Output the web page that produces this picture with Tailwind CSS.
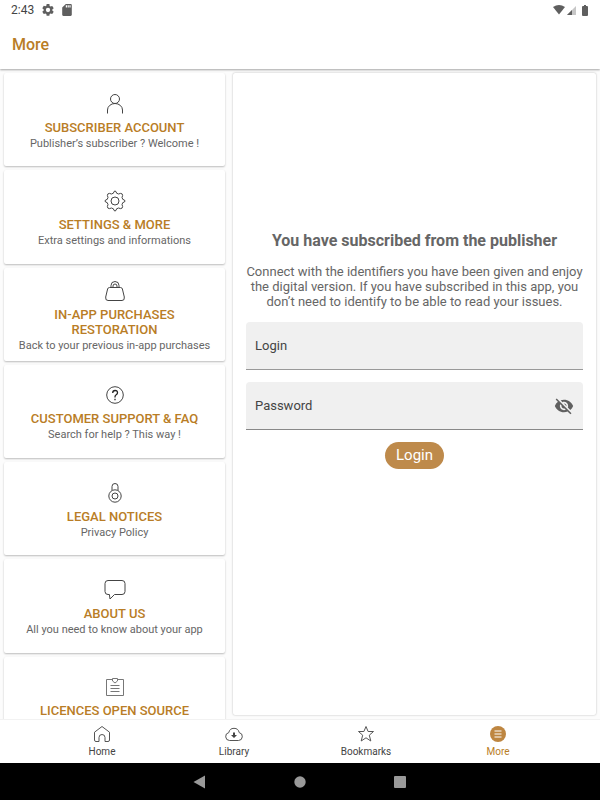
<!DOCTYPE html>
<html lang="en">
<head>
<meta charset="utf-8">
<meta name="viewport" content="width=device-width, initial-scale=1">
<title>More</title>
<script src="https://cdn.jsdelivr.net/npm/@tailwindcss/browser@4"></script>
</head>
<body class="flex h-screen flex-col overflow-hidden bg-[#fcfcfc] font-[Roboto,sans-serif] text-[#666]">

<div class="z-20 flex h-5 shrink-0 items-center justify-between bg-white pr-3 pl-[11px] text-[#5f5f5f]">
  <div class="flex items-center">
    <span class="text-xs text-[#444]">2:43</span>
    <svg class="ml-2 size-3" viewBox="2 2 20 20" fill="currentColor" aria-hidden="true"><path d="M19.14 12.94c.04-.3.06-.61.06-.94s-.02-.64-.07-.94l2.03-1.58a.5.5 0 0 0 .12-.61l-1.92-3.32a.49.49 0 0 0-.59-.22l-2.39.96a7 7 0 0 0-1.62-.94l-.36-2.54A.48.48 0 0 0 13.92 2h-3.84a.47.47 0 0 0-.47.41l-.36 2.54c-.59.24-1.13.57-1.62.94l-2.39-.96a.47.47 0 0 0-.59.22L2.74 8.87a.47.47 0 0 0 .12.61l2.03 1.58c-.05.3-.09.63-.09.94s.02.64.07.94l-2.03 1.58a.5.5 0 0 0-.12.61l1.92 3.32c.12.22.37.29.59.22l2.39-.96c.5.38 1.03.7 1.62.94l.36 2.54c.05.24.24.41.48.41h3.84c.24 0 .44-.17.47-.41l.36-2.54a6.8 6.8 0 0 0 1.62-.94l2.39.96c.22.08.47 0 .59-.22l1.92-3.32a.47.47 0 0 0-.12-.61zM12 15.6a3.6 3.6 0 1 1 0-7.2 3.6 3.6 0 0 1 0 7.2z"/></svg>
    <svg class="ml-2 h-3 w-[10px]" viewBox="4 2 16 20" fill="currentColor" aria-hidden="true"><path d="M18 2h-8L4 8v12c0 1.100.9 2 2 2h12c1.100 0 2-.9 2-2V4c0-1.100-.9-2-2-2zm-6 6h-2V4h2zm3 0h-2V4h2zm3 0h-2V4h2z"/></svg>
  </div>
  <div class="flex items-center">
    <svg class="h-[10px] w-3" viewBox="0 0 12 10" fill="currentColor" aria-hidden="true"><path d="M0 2Q6-2 12 2L6 9.500z"/></svg>
    <svg class="ml-[2px] size-[9px]" viewBox="0 0 9 9" fill="currentColor" aria-hidden="true"><path d="M9 0v9H0z" opacity=".35"/><path d="M5 4v5H0z"/></svg>
    <svg class="ml-[6px] h-[11px] w-[6px]" viewBox="0 0 6 11" fill="currentColor" aria-hidden="true"><path d="M2 0h2v1h1q1 0 1 1v8q0 1-1 1H1q-1 0-1-1V2q0-1 1-1h1z"/></svg>
  </div>
</div>

<header class="z-10 flex h-[49px] shrink-0 items-center bg-white px-3 shadow-[0_1px_2px_rgba(0,0,0,0.35)]">
  <h1 class="text-base font-medium text-[#b97d26]">More</h1>
</header>

<main class="flex min-h-0 flex-1 gap-2 pr-1 pl-1 pt-1">
  <ul class="grid min-h-[677px] w-[221px] shrink-0 auto-rows-fr gap-1 self-start text-center">
    <li><a href="#account" class="flex h-full flex-col items-center justify-center rounded-xs bg-white px-3 pt-1 shadow-[0_1px_2px_rgba(0,0,0,0.25)]">
      <svg class="mb-1 size-6" viewBox="0 0 24 24" fill="none" stroke="#444" aria-hidden="true"><circle cx="12" cy="7" r="4.500"/><path d="M4.500 21.500v-3.500a7.500 6.500 0 0 1 15 0v3.500"/></svg>
      <span class="text-[13px] leading-[15px] font-medium text-[#b97d26]">SUBSCRIBER ACCOUNT</span>
      <span class="mt-px text-[11px] leading-4">Publisher’s subscriber ? Welcome !</span></a></li>
    <li><a href="#settings" class="flex h-full flex-col items-center justify-center rounded-xs bg-white px-3 pt-1 shadow-[0_1px_2px_rgba(0,0,0,0.25)]">
      <svg class="mb-1 size-6" viewBox="0 0 24 24" fill="none" stroke="#444" stroke-linejoin="round" aria-hidden="true"><circle cx="12" cy="12" r="4"/><path d="M12 2q1.200 0 1.600 2.200l2 .8Q17.600 3.800 19.100 4.900 20.200 6.400 19 8.400l.8 2Q22 10.800 22 12t-2.200 1.600l-.8 2q1.200 2 .1 3.500-1.500 1.100-3.500-.1l-2 .8Q13.200 22 12 22t-1.600-2.200l-2-.8q-2 1.200-3.500.1-1.100-1.500.1-3.500l-.8-2Q2 13.200 2 12t2.200-1.600l.8-2Q3.800 6.400 4.900 4.900q1.500-1.100 3.500.1l2-.8Q10.800 2 12 2z"/></svg>
      <span class="text-[13px] leading-[15px] font-medium text-[#b97d26]">SETTINGS &amp; MORE</span>
      <span class="mt-px text-[11px] leading-4">Extra settings and informations</span></a></li>
    <li><a href="#purchases" class="flex h-full flex-col items-center justify-center rounded-xs bg-white px-3 pt-1 shadow-[0_1px_2px_rgba(0,0,0,0.25)]">
      <svg class="mb-1 size-6" viewBox="0 0 24 24" fill="none" stroke="#444" aria-hidden="true"><path d="M6.500 8.500h11q1.500 0 1.900 1.500l1.900 8q.6 3.500-2.300 3.500H5q-2.900 0-2.300-3.500l1.900-8q.4-1.500 1.900-1.500zM8 8.500V6.500a4 4 0 0 1 8 0v2M10 8.500V7a2 2 0 0 1 4 0v1.500"/></svg>
      <span class="text-[13px] leading-[15px] font-medium text-[#b97d26]">IN-APP PURCHASES<br>RESTORATION</span>
      <span class="mt-px text-[11px] leading-4">Back to your previous in-app purchases</span></a></li>
    <li><a href="#support" class="flex h-full flex-col items-center justify-center rounded-xs bg-white px-3 pt-1 shadow-[0_1px_2px_rgba(0,0,0,0.25)]">
      <svg class="mb-1 size-6" viewBox="0 0 24 24" fill="none" stroke="#444" aria-hidden="true"><circle cx="12" cy="12" r="8.300"/><path d="M9.700 10q0-2.500 2.400-2.500t2.400 2.200q0 1.200-1.300 2T12 14v.5M12 15.800v1.400" stroke="#222" stroke-width="1.300"/></svg>
      <span class="text-[13px] leading-[15px] font-medium text-[#b97d26]">CUSTOMER SUPPORT &amp; FAQ</span>
      <span class="mt-px text-[11px] leading-4">Search for help ? This way !</span></a></li>
    <li><a href="#legal" class="flex h-full flex-col items-center justify-center rounded-xs bg-white px-3 pt-1 shadow-[0_1px_2px_rgba(0,0,0,0.25)]">
      <svg class="mb-1 size-6" viewBox="0 0 24 24" fill="none" stroke="#444" aria-hidden="true"><circle cx="12" cy="15" r="6.200"/><circle cx="12" cy="15" r="3"/><path d="M9 9.500V5.500a3 3 0 0 1 6 0v4"/></svg>
      <span class="text-[13px] leading-[15px] font-medium text-[#b97d26]">LEGAL NOTICES</span>
      <span class="mt-px text-[11px] leading-4">Privacy Policy</span></a></li>
    <li><a href="#about" class="flex h-full flex-col items-center justify-center rounded-xs bg-white px-3 pt-1 shadow-[0_1px_2px_rgba(0,0,0,0.25)]">
      <svg class="mb-1 size-6" viewBox="0 0 24 24" fill="none" stroke="#444" stroke-linejoin="round" aria-hidden="true"><path d="M5 2.500h14q3 0 3 3v8q0 3-3 3h-7.500l-4.500 4.500-.6-4.500H5q-3 0-3-3v-8q0-3 3-3z"/></svg>
      <span class="text-[13px] leading-[15px] font-medium text-[#b97d26]">ABOUT US</span>
      <span class="mt-px text-[11px] leading-4">All you need to know about your app</span></a></li>
    <li><a href="#licences" class="flex h-full flex-col items-center justify-center rounded-xs bg-white px-3 pt-1 shadow-[0_1px_2px_rgba(0,0,0,0.25)]">
      <svg class="mb-1 size-6" viewBox="0 0 24 24" fill="none" stroke="#777" aria-hidden="true"><path d="M9.500 4.500h-6v16h17v-16h-6M9.500 3.500h5v2.500l-2.500 2-2.500-2zM7.500 10.500h9M7.500 13.500h9M7.500 16.500h9"/></svg>
      <span class="text-[13px] leading-[15px] font-medium text-[#b97d26]">LICENCES OPEN SOURCE</span>
      <span class="mt-px text-[11px] leading-4">Licences</span></a></li>
  </ul>

  <section class="mb-1 min-w-0 flex-1 rounded-xs bg-white px-[13px] pt-[158px] text-center shadow-[0_0_2px_rgba(0,0,0,0.3)]">
    <h2 class="text-base leading-5 font-bold">You have subscribed from the publisher</h2>
    <p class="mt-[13px] text-[13px] leading-[15px]">Connect with the identifiers you have been given and enjoy the digital version. If you have subscribed in this app, you don’t need to identify to be able to read your issues.</p>
    <form class="mt-[13px] flex flex-col items-center gap-3">
      <div class="flex h-12 w-full items-center rounded-t-sm border-b border-[#999] bg-[#f0f0f0] px-[9px] text-[13px] text-[#444]">
        <label for="login">Login</label>
        <input id="login" type="text" class="h-full min-w-0 flex-1 bg-transparent pl-3 outline-none">
      </div>
      <div class="flex h-12 w-full items-center rounded-t-sm border-b border-[#888] bg-[#f0f0f0] px-[9px] text-[13px] text-[#444]">
        <label for="password">Password</label>
        <input id="password" type="password" class="h-full min-w-0 flex-1 bg-transparent pl-3 outline-none">
        <button type="button" aria-label="Show password" class="text-[#606060]"><svg class="size-5" viewBox="0 0 24 24" fill="currentColor" aria-hidden="true"><path d="M12 7c2.760 0 5 2.240 5 5 0 .65-.13 1.260-.36 1.830l2.920 2.920c1.510-1.260 2.700-2.890 3.430-4.750-1.730-4.390-6-7.500-11-7.500-1.400 0-2.740.25-3.980.7l2.160 2.160C10.740 7.130 11.350 7 12 7zM2 4.270l2.280 2.280.46.46A11.800 11.800 0 0 0 1 12c1.730 4.390 6 7.500 11 7.500 1.550 0 3.030-.3 4.380-.84l.42.42L19.730 22 21 20.730 3.270 3zM7.530 9.800l1.550 1.550c-.05.21-.08.43-.08.65 0 1.660 1.340 3 3 3 .22 0 .44-.03.65-.08l1.550 1.550c-.67.33-1.410.53-2.200.53-2.760 0-5-2.240-5-5 0-.79.2-1.530.53-2.200zm4.310-.78l3.150 3.150.02-.16c0-1.660-1.340-3-3-3z"/></svg></button>
      </div>
      <button type="submit" class="h-[27px] rounded-full bg-[#be8a4b] px-[11px] text-[15px] text-white">Login</button>
    </form>
  </section>
</main>

<nav class="z-10 grid h-11 shrink-0 grid-cols-[36px_repeat(4,1fr)_36px] border-t border-[#f2f2f2] bg-white text-[10px] text-[#444]">
  <a href="#home" class="col-start-2 flex flex-col items-center pt-1">
    <svg class="size-5" viewBox="0 0 20 20" fill="none" stroke="#555" stroke-linejoin="round" aria-hidden="true"><path d="M2.500 8.200L10 2.500l7.500 5.700v7.800q0 1.500-1.500 1.500h-3v-4a3 3 0 0 0-6 0v4H4q-1.500 0-1.500-1.500z"/></svg>
    <span class="mt-[2px] leading-3">Home</span></a>
  <a href="#library" class="flex flex-col items-center pt-1">
    <svg class="size-5" viewBox="0 0 20 20" fill="none" stroke="#555" stroke-linejoin="round" aria-hidden="true"><path d="M5.500 16.500a4 4 0 0 1-.7-7.900 5.300 5.300 0 0 1 10.400 0 4 4 0 0 1-.7 7.900z"/><path fill="#444" stroke="none" d="M9 8.500h2V11h2l-3 3-3-3h2z"/></svg>
    <span class="mt-[2px] leading-3">Library</span></a>
  <a href="#bookmarks" class="flex flex-col items-center pt-1">
    <svg class="size-5" viewBox="0 0 20 20" fill="none" stroke="#555" stroke-linejoin="round" aria-hidden="true"><path d="M10 2.500l2.100 5h5.400l-4.200 3.700 1.500 5.800-4.800-3.200L5.200 17l1.500-5.800L2.500 7.500h5.400z"/></svg>
    <span class="mt-[2px] leading-3">Bookmarks</span></a>
  <a href="#more" aria-current="page" class="flex flex-col items-center pt-1 text-[#b97d26]">
    <svg class="size-5" viewBox="0 0 20 20" aria-hidden="true"><circle cx="10" cy="10" r="8" fill="#be8641"/><path d="M6.500 7h7M6.500 10h7M6.500 13h7" stroke="#fff"/></svg>
    <span class="mt-[2px] leading-3">More</span></a>
</nav>

<div class="z-10 flex h-[37px] shrink-0 items-center justify-center gap-20 bg-black text-[#999]">
  <button type="button" aria-label="Back"><svg class="size-5" viewBox="0 0 20 20" fill="currentColor" aria-hidden="true"><path d="M15 3.500v13L3.500 10z"/></svg></button>
  <button type="button" aria-label="Home"><svg class="size-5" viewBox="0 0 20 20" fill="currentColor" aria-hidden="true"><circle cx="10" cy="10" r="5.700"/></svg></button>
  <button type="button" aria-label="Recent apps"><svg class="size-5" viewBox="0 0 20 20" fill="currentColor" aria-hidden="true"><rect x="4" y="4" width="12" height="12" rx="1"/></svg></button>
</div>
</body>
</html>
